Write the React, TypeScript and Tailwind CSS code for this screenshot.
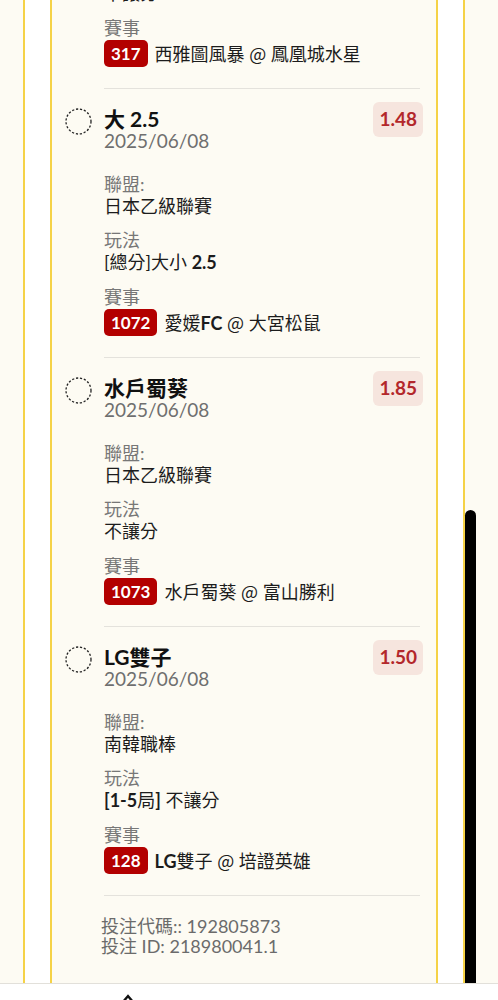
import { ReactNode } from 'react'

interface Bet {
  title: ReactNode
  date: string
  odds: string
  league: string
  play: ReactNode
  code: string
  match: ReactNode
}

const At = () => <span className="font-normal font-['Noto_Sans_CJK_TC',sans-serif]">@</span>

const bets: Bet[] = [
  {
    title: '鳳凰城水星',
    date: '2025/06/08',
    odds: '1.72',
    league: 'WNBA',
    play: '不讓分',
    code: '317',
    match: (
      <>
        西雅圖風暴 <At /> 鳳凰城水星
      </>
    ),
  },
  {
    title: '大 2.5',
    date: '2025/06/08',
    odds: '1.48',
    league: '日本乙級聯賽',
    play: (
      <>
        [總分]大小 <b className="font-bold">2.5</b>
      </>
    ),
    code: '1072',
    match: (
      <>
        愛媛<b className="font-bold">FC</b> <At /> 大宮松鼠
      </>
    ),
  },
  {
    title: '水戶蜀葵',
    date: '2025/06/08',
    odds: '1.85',
    league: '日本乙級聯賽',
    play: '不讓分',
    code: '1073',
    match: (
      <>
        水戶蜀葵 <At /> 富山勝利
      </>
    ),
  },
  {
    title: 'LG雙子',
    date: '2025/06/08',
    odds: '1.50',
    league: '南韓職棒',
    play: (
      <>
        <b className="font-bold">[1-5</b>局<b className="font-bold">]</b> 不讓分
      </>
    ),
    code: '128',
    match: (
      <>
        <b className="font-bold">LG</b>雙子 <At /> 培證英雄
      </>
    ),
  },
]

function DashedCircle() {
  return (
    <svg width="27" height="27" viewBox="0 0 27 27" className="mt-[19px] shrink-0">
      <circle cx="13.5" cy="13.5" r="12.5" fill="none" stroke="#222" strokeWidth="1.3" strokeDasharray="2.2 1.8" />
    </svg>
  )
}

function Field({ label, children, className = '' }: { label: string; children: ReactNode; className?: string }) {
  return (
    <div className={className}>
      <div className="text-[18px] leading-[22px] text-[#777]">{label}</div>
      <div className="text-[18px] leading-[22px] text-[#1c1c1c]">{children}</div>
    </div>
  )
}

function BetRow({ bet }: { bet: Bet }) {
  return (
    <div className="flex gap-[12px]">
      <DashedCircle />
      <div className="flex-1 min-w-0">
        <div className="pt-[13px] pb-[21px]">
          {/* header: title + date, odds pill */}
          <div className="flex items-start justify-between">
            <div className="mt-[6px]">
              <div className="text-[21px] leading-[22px] font-bold text-[#111]">{bet.title}</div>
              <div className="text-[19px] leading-[22px] text-[#6f6f6f]">{bet.date}</div>
            </div>
            <div className="flex h-[35px] items-center rounded-md bg-[#f6e5de] px-[6px] text-[19px] font-bold text-[#b3272b]">
              {bet.odds}
            </div>
          </div>

          <Field label="聯盟:" className="mt-[21px]">{bet.league}</Field>
          <Field label="玩法" className="mt-[12px]">{bet.play}</Field>

          <div className="mt-[13px]">
            <div className="text-[18px] leading-[22px] text-[#777]">賽事</div>
            <div className="mt-[1px] flex items-center gap-[7px]">
              <span className="flex h-[27px] items-center rounded-[5px] bg-[#b30000] px-[7px] text-[17px] font-bold text-white">
                {bet.code}
              </span>
              <span className="text-[18px] leading-[22px] text-[#1c1c1c]">{bet.match}</span>
            </div>
          </div>
        </div>
        <div className="mr-[3px] h-px bg-[#e4e2dc]" />
      </div>
    </div>
  )
}

export default function App() {
  return (
    <div className="relative h-[1000px] w-[498px] overflow-hidden bg-[#fdfbf3] font-['Lato','Noto_Sans_CJK_TC',sans-serif]">
      <div className="ml-[23px] h-[983px] w-[442px] overflow-hidden border-x-2 border-[#f5d247] bg-white px-[25px]">
        <div className="h-full overflow-hidden border-x-2 border-[#f5d247] bg-[#fdfbf3] px-[13px]">
          <div className="-mt-[180px]">
            {bets.map((bet) => (
              <BetRow key={bet.code} bet={bet} />
            ))}

            {/* bet codes */}
            <div className="ml-[36px] pt-[20px] text-[18px] leading-[20px] text-[#6b6b6b]">
              <div>投注代碼:: 192805873</div>
              <div>投注 ID: 218980041.1</div>
            </div>
          </div>
        </div>
      </div>

      {/* scrollbar thumb */}
      <div className="absolute left-[465px] top-[510px] h-[473px] w-[11px] rounded-t-full bg-black" />

      {/* bottom bar */}
      <div className="h-[17px] border-t border-[#e2e0da] bg-white">
        <svg width="14" height="8" viewBox="0 0 14 8" className="ml-[121px] mt-[10px]">
          <path d="M2 8 L7 2 L12 8" fill="none" stroke="#111" strokeWidth="2.4" strokeLinecap="round" />
        </svg>
      </div>
    </div>
  )
}
